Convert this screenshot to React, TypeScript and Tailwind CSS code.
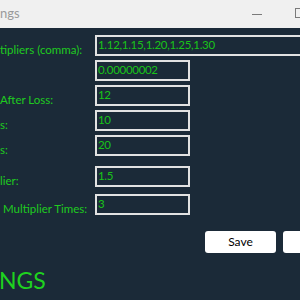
const font = "font-['Lato','Noto_Sans',sans-serif]";

const rows = [
  { label: "tipliers (comma):", value: "1.12,1.15,1.20,1.25,1.30", wide: true, mt: "mt-[7px]", pad: "" },
  { label: "", value: "0.00000002", wide: false, mt: "mt-[4px]", pad: "" },
  { label: "After Loss:", value: "12", wide: false, mt: "mt-[4px]", pad: "" },
  { label: "s:", value: "10", wide: false, mt: "mt-[4px]", pad: "" },
  { label: "s:", value: "20", wide: false, mt: "mt-[4px]", pad: "" },
  { label: "lier:", value: "1.5", wide: false, mt: "mt-[10px]", pad: "" },
  { label: "Multiplier Times:", value: "3", wide: false, mt: "mt-[7px]", pad: "pl-[3px]" },
];

export default function App() {
  return (
    <div className={`w-[300px] h-[300px] overflow-hidden bg-[#1b2a38] ${font}`}>
      <div className="h-[28px] bg-[#f0f0f0] flex items-center">
        <div className="w-[252px] shrink-0 text-[13px] text-[#9a9a9a] leading-none -mt-[2px]">ngs</div>
        <div className="w-[10px] h-px bg-[#7a7a7a] shrink-0" />
        <div className="w-[10px] h-[10px] border border-[#7a7a7a] ml-[33px] shrink-0 -mt-[3px]" />
      </div>

      <div className="flex flex-col">
        {rows.map((r, i) => (
          <div key={i} className={`flex items-start h-[21px] ${r.mt}`}>
            <div className={`w-[95px] shrink-0 text-[11.5px] leading-[14px] text-[#1fcb1f] mt-[8px] whitespace-nowrap ${r.pad}`}>
              {r.label}
            </div>
            <div
              className={`h-[21px] ${r.wide ? "w-[220px] shrink-0" : "w-[95px]"} border-2 border-[#e2e2e2] text-[11.5px] leading-[16px] tracking-[-0.3px] text-[#19c219] pl-[1px] whitespace-nowrap overflow-hidden`}
            >
              {r.value}
            </div>
          </div>
        ))}
      </div>

      <div className="flex gap-[7px] pl-[205px] mt-[16px]">
        <button className="w-[71px] h-[22px] shrink-0 bg-white rounded-[3px] text-[12px] text-black">Save</button>
        <button className="w-[71px] h-[22px] shrink-0 bg-white rounded-[3px] text-[12px] text-black" />
      </div>

      <div className="mt-[12px] text-[23px] leading-[30px] text-[#1fd21f] -ml-[1px]">NGS</div>
    </div>
  );
}
